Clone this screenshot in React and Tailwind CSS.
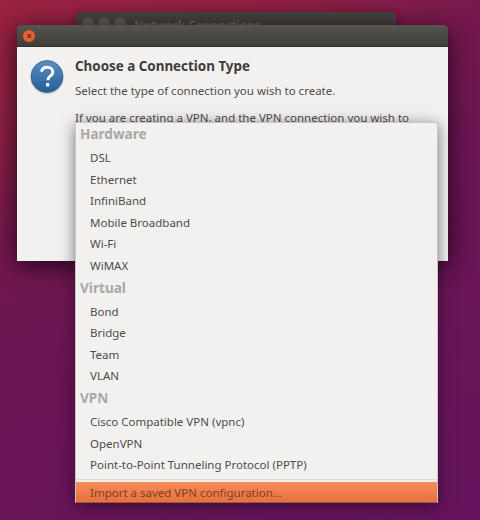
const SECTIONS = [
  { title: 'Hardware', items: ['DSL', 'Ethernet', 'InfiniBand', 'Mobile Broadband', 'Wi-Fi', 'WiMAX'] },
  { title: 'Virtual', items: ['Bond', 'Bridge', 'Team', 'VLAN'] },
  { title: 'VPN', items: ['Cisco Compatible VPN (vpnc)', 'OpenVPN', 'Point-to-Point Tunneling Protocol (PPTP)'] },
]

function HelpIcon() {
  return (
    <svg width="36" height="36" viewBox="0 0 36 36" className="shrink-0">
      <defs>
        <linearGradient id="help" x1="0" y1="0" x2="0" y2="1">
          <stop offset="0" stopColor="#5b8fc0" />
          <stop offset="0.55" stopColor="#3a74ab" />
          <stop offset="1" stopColor="#2a5c8e" />
        </linearGradient>
      </defs>
      <ellipse cx="18" cy="19" rx="16.5" ry="16.5" fill="#000" opacity="0.12" />
      <circle cx="18" cy="17.5" r="16" fill="url(#help)" stroke="#2f6091" strokeWidth="0.8" />
      <path d="M12.4 12.6c.8-3 3-4.4 5.8-4.4 3.3 0 5.6 1.9 5.6 4.7 0 2-1 3.1-2.6 4.2-1.6 1.1-2.2 1.8-2.2 3.6v.6" fill="none" stroke="#fff" strokeWidth="2.9" />
      <rect x="17" y="24" width="3.2" height="3.4" rx="0.6" fill="#fff" />
    </svg>
  )
}

export default function App() {
  return (
    <div className="relative w-[480px] h-[520px] overflow-hidden bg-[linear-gradient(155deg,#9a2240_0%,#8c2042_18%,#74184e_33%,#6b1553_50%,#64145c_100%)] font-['Noto_Sans',sans-serif] text-[#4c4c4c]">
      {/* window behind */}
      <div className="absolute left-[76px] top-[12px] w-[320px] h-[40px] rounded-t-[5px] bg-[linear-gradient(#45433e,#3a3935)] shadow-[0_2px_10px_rgba(20,0,20,0.4)] flex items-start gap-[4px] pl-[6px] pt-[6px]">
        <span className="w-[12px] h-[12px] rounded-full bg-[#5c5a55]" />
        <span className="w-[12px] h-[12px] rounded-full bg-[#5c5a55]" />
        <span className="w-[12px] h-[12px] rounded-full bg-[#5c5a55]" />
        <span className="ml-[4px] text-[12px] leading-[16px] font-semibold text-[#6d6b65]">Network Connections</span>
      </div>

      {/* dialog */}
      <div className="absolute left-[17px] top-[25px] w-[431px] h-[236px] rounded-t-[5px] shadow-[0_5px_24px_rgba(15,0,15,0.8)]">
        <div className="h-[22px] rounded-t-[5px] bg-[linear-gradient(#56544e,#403e3a)] border-b border-[#33322e] flex items-center pl-[6px]">
          <span className="w-[12px] h-[12px] rounded-full bg-[#e9602f] flex items-center justify-center text-[10px] leading-none font-bold text-[#6b2a14]">×</span>
        </div>
        <div className="h-[214px] bg-[#f2f1f0] flex gap-[10px] pl-[12px] pt-[9px]">
          <div className="pt-[3px]"><HelpIcon /></div>
          <div>
            <div className="text-[13.4px] leading-[20px] font-bold text-[#3c3c3c]">Choose a Connection Type</div>
            <div className="mt-[6px] text-[11.5px] leading-[18px]">Select the type of connection you wish to create.</div>
            <div className="mt-[9px] text-[11.5px] leading-[18px]">If you are creating a VPN, and the VPN connection you wish to</div>
          </div>
        </div>
      </div>

      {/* popup menu */}
      <div className="absolute left-[75px] top-[122px] w-[363px] h-[381px] bg-[#f2f1f0] border border-[#c9c7c3] border-b-[#9a5a3c] shadow-[0_3px_14px_rgba(20,0,20,0.55)] flex flex-col">
        {SECTIONS.map((s) => (
          <div key={s.title}>
            <div className="pl-[4px] h-[24px] text-[13.6px] leading-[22px] font-bold text-[#a9a8a6]">{s.title}</div>
            {s.items.map((item) => (
              <div key={item} className="pl-[14px] h-[21.6px] text-[11.5px] leading-[21.6px]">{item}</div>
            ))}
          </div>
        ))}
        <div className="mt-auto border-t border-[#dcdad7]">
          <div className="mt-[2px] h-[20px] pl-[14px] text-[11.5px] leading-[22px] text-[#7c4024] bg-[linear-gradient(#f68d59,#e8703f)]">
            Import a saved VPN configuration...
          </div>
        </div>
      </div>
    </div>
  )
}
